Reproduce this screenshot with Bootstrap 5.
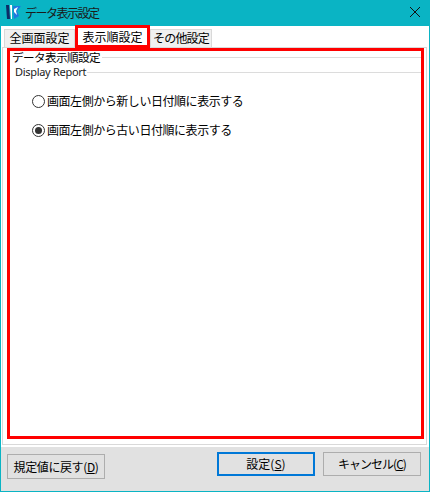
<!DOCTYPE html>
<html lang="ja"><head><meta charset="utf-8">
<link href="https://cdn.jsdelivr.net/npm/bootstrap@5.3.0/dist/css/bootstrap.min.css" rel="stylesheet">
<style>
html,body{height:100%;margin:0;overflow:hidden}
body{font-family:"Noto Sans CJK JP","Liberation Sans",sans-serif;font-size:12px;color:#000;background:#fff}
.win{width:430px;height:492px;border:1px solid #0ab4c4;border-top:0;display:flex;flex-direction:column}
.tbar{height:26px;flex:none;background:#0ab4c4;margin:0 -1px;padding:0 9px 2px 5px;gap:4px;color:#1a1a1a}
.ttl{font-size:12px;letter-spacing:-1.5px;line-height:16px;margin-top:1px}
.tabrow{height:21px;flex:none;padding:0 0 0 3px;align-items:flex-end;position:relative}
.wtab{height:18px;line-height:16px;background:#f0f0f0;border:1px solid #d9d9d9;border-bottom:0;padding:0;font-size:12px;white-space:nowrap;text-align:center}
.wtab.on{height:23px;line-height:18px;background:#fff;border:3px solid #f00;margin-bottom:-1px;position:relative;z-index:1;width:75px}
.wtab.w1{width:71px}.wtab.w3{width:62px;letter-spacing:-.8px}
.panelwrap{flex:none;height:398px;margin:0 2px 0 1px;border:1px solid #d9d9d9;padding:0 2px 5px 4px;background:#fff}
.panel{height:100%;border:3px solid #f00;background:#fff;padding:0 0 0 2px}
.grp{height:12px;line-height:12px;margin-bottom:3px;display:flex;align-items:center;white-space:nowrap}
.grp::after{content:"";flex:1;height:1px;background:#dcdcdc}
.g1{font-size:11.6px;letter-spacing:-.6px;padding-right:2px}
.g2{font-family:"Noto Sans",sans-serif;font-size:11px;letter-spacing:-.3px;padding:0 1px 0 3px;color:#1a1a1a}
.rad{display:flex;align-items:center;gap:2px;font-size:12px;letter-spacing:-.45px;line-height:18px;margin-left:20px}
.r1{margin-top:14px}.r2{margin-top:11px}
.rmark{width:13px;height:13px;border:1px solid #333;border-radius:50%;background:#fff;display:block;position:relative;flex:none}
.rmark.sel::after{content:"";position:absolute;left:2px;top:2px;width:7px;height:7px;border-radius:50%;background:#333}
.foot{flex:1;background:#e1e1e1;padding:5px 8px 0 6px;margin-top:2px;align-items:flex-start}
.wbtn{background:#e1e1e1;border:1px solid #adadad;height:24px;width:98px;font-size:12px;line-height:20px;text-align:center;white-space:nowrap;padding:0;color:#000;border-radius:0}
.wbtn u{text-underline-offset:1px}
.wbtn.def{border:2px solid #0078d7}
.wbtn.can{letter-spacing:-1px}
.wbtn.rst{margin-top:2px;height:25px;letter-spacing:-.4px}
</style></head><body>
<div class="win">
  <div class="tbar d-flex align-items-center">
    <svg width="16" height="16" viewBox="0 0 16 16"><path d="M1 1h3l1 14H2z" fill="#0d2b66"/><path d="M5 1h2v14H6z" fill="#fff"/><path d="M8 2h8l-4 5 2 5-5 3z" fill="#1f78e0"/><path d="M9 5l4-2-2 4 1 4-3-3z" fill="#fff"/></svg>
    <span class="ttl flex-grow-1">データ表示設定</span>
    <svg width="12" height="12" viewBox="0 0 12 12"><path d="M1 1l10 10M11 1L1 11" stroke="#111" stroke-width="1" fill="none"/></svg>
  </div>
  <div class="tabrow d-flex">
    <div class="wtab w1">全画面設定</div>
    <div class="wtab on">表示順設定</div>
    <div class="wtab w3">その他設定</div>
  </div>
  <div class="panelwrap">
    <div class="panel">
      <div class="grp"><span class="g1">データ表示順設定</span></div>
      <div class="grp"><span class="g2">Display Report</span></div>
      <div class="rad r1"><span class="rmark"></span><span>画面左側から新しい日付順に表示する</span></div>
      <div class="rad r2"><span class="rmark sel"></span><span>画面左側から古い日付順に表示する</span></div>
    </div>
  </div>
  <div class="foot d-flex justify-content-between">
    <button class="wbtn rst">規定値に戻す(<u>D</u>)</button>
    <div class="d-flex gap-2">
      <button class="wbtn def">設定(<u>S</u>)</button>
      <button class="wbtn can">キャンセル(<u>C</u>)</button>
    </div>
  </div>
</div>
<script src="https://cdn.jsdelivr.net/npm/bootstrap@5.3.0/dist/js/bootstrap.bundle.min.js"></script>
</body></html>
